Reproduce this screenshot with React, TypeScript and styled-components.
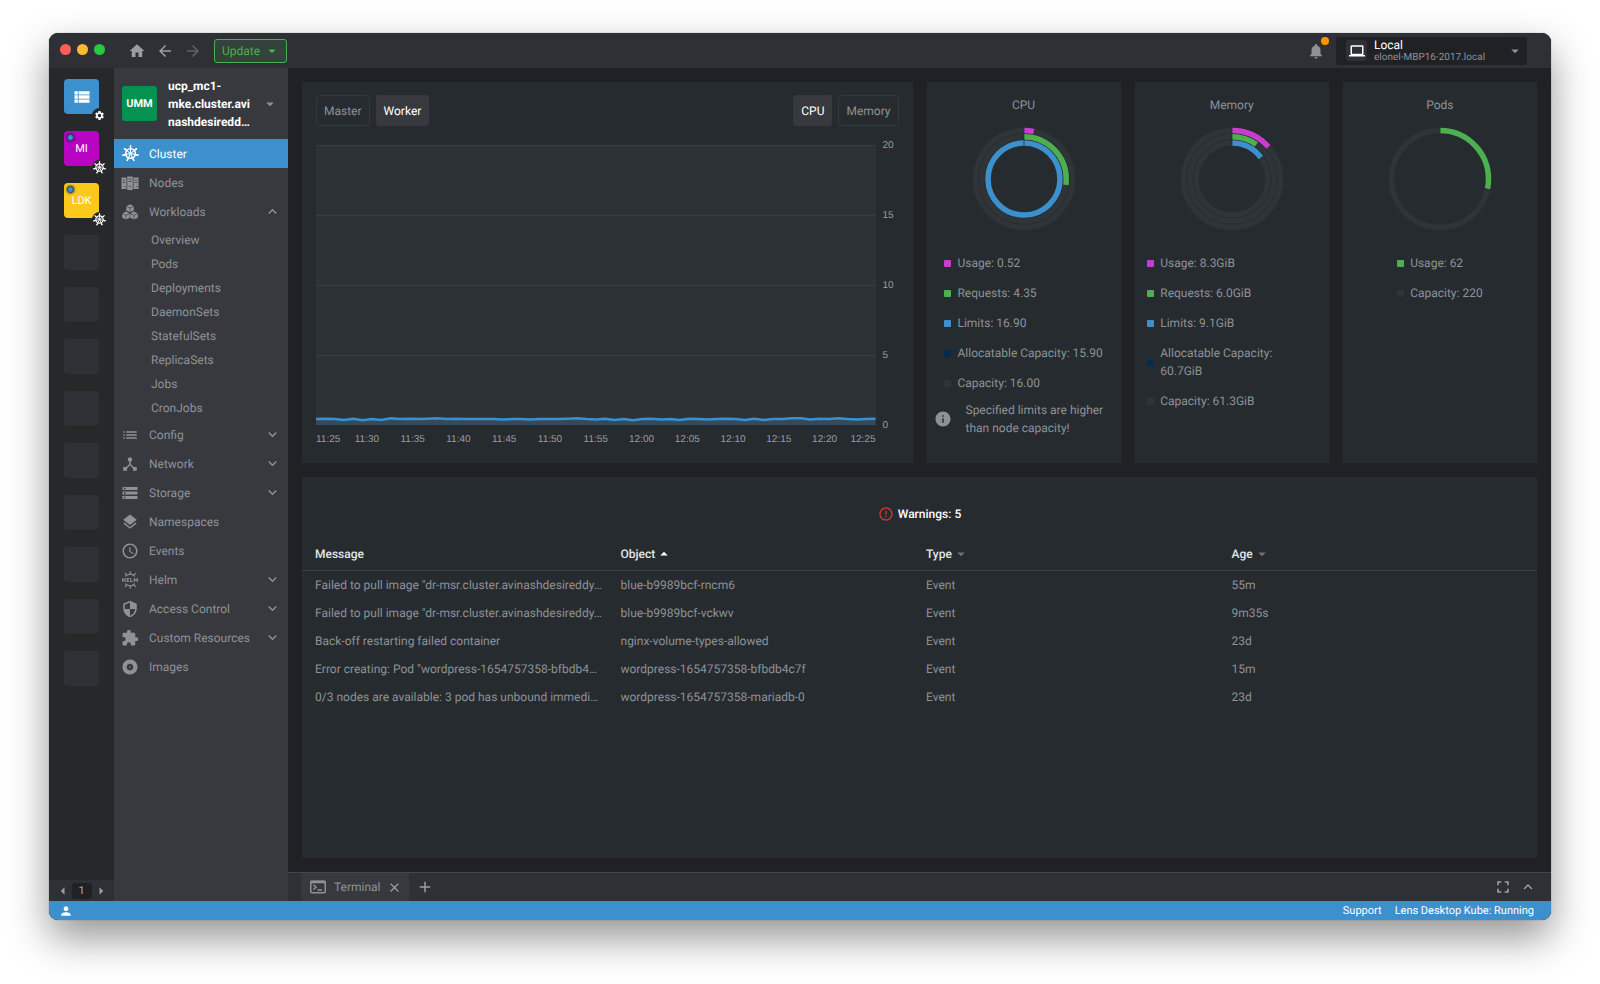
import React from "react";
import styled, { createGlobalStyle, css } from "styled-components";
import {
  MdAdd, MdAlbum, MdArrowBack, MdArrowDropDown, MdArrowDropUp, MdArrowForward, MdArrowLeft,
  MdArrowRight, MdClose, MdDeviceHub, MdErrorOutline, MdExtension, MdFullscreen, MdHome,
  MdInfo, MdKeyboardArrowDown, MdKeyboardArrowUp, MdLayers, MdList, MdNotifications,
  MdPerson, MdAccessTime, MdSecurity, MdSettings, MdStorage, MdViewList,
} from "react-icons/md";
import { SiHelm } from "react-icons/si";

const color = {
  main: "#202125",
  bar: "#2f3036",
  side: "#38393f",
  rail: "#262829",
  card: "#262b2f",
  text: "#8e9297",
  faint: "#2f3438",
  line: "#3a3e42",
  blue: "#3d90ce",
  green: "#4caf50",
  pink: "#c93dce",
  navy: "#032b4d",
};

const Global = createGlobalStyle`
  * { box-sizing: border-box; }
  body {
    margin: 0;
    background: #fff;
    color: ${color.text};
    font: 12px/18px Roboto, "Liberation Sans", sans-serif;
    text-rendering: geometricPrecision;
  }
  button { font: inherit; color: inherit; background: none; border: 0; padding: 0; margin: 0; text-rendering: inherit; }
  a { color: inherit; text-decoration: none; }
  ul { list-style: none; margin: 0; padding: 0; }
  h1, h2 { font: inherit; margin: 0; }
  svg { display: block; flex: none; }
`;

const Page = styled.div`
  display: flex;
  min-height: 100vh;
  padding: 33px 49px 64px;
`;

const Window = styled.div`
  flex: 1;
  min-width: 0;
  display: flex;
  flex-direction: column;
  overflow: hidden;
  border-radius: 9px;
  background: ${color.main};
  box-shadow: 0 0 1px rgba(0, 0, 0, 0.6), 0 18px 40px rgba(0, 0, 0, 0.42);
`;

/* ---------- title bar ---------- */

const TitleBar = styled.header`
  height: 35px;
  display: flex;
  align-items: center;
  padding: 0 24px 0 11px;
  background: ${color.bar};
`;

const Lights = styled.div`
  display: flex;
  gap: 6px;
  margin: 0 18px 3px 0;
`;

const Light = styled.button<{ $color: string }>`
  width: 11px;
  height: 11px;
  border-radius: 50%;
  background: ${(p) => p.$color};
`;

const IconButton = styled.button<{ $dim?: boolean; $width?: number }>`
  display: flex;
  align-items: center;
  justify-content: center;
  width: ${(p) => p.$width ?? 28}px;
  height: 24px;
  color: ${(p) => (p.$dim ? "#5e6166" : "#9a9ea3")};
`;

const UpdateButton = styled.button`
  display: flex;
  align-items: center;
  justify-content: space-between;
  width: 73px;
  height: 24px;
  margin-left: 7px;
  padding: 0 5px 0 7px;
  border: 1px solid ${color.green};
  border-radius: 3px;
  background: #33423a;
  color: ${color.green};
`;

const Spacer = styled.div`
  flex: 1;
`;

const Bell = styled.button`
  position: relative;
  width: 18px;
  height: 18px;
  margin-right: 11px;
  color: #8e9297;
`;

const BellDot = styled.span`
  position: absolute;
  top: -5px;
  right: -4px;
  width: 8px;
  height: 8px;
  border-radius: 50%;
  background: #ff9800;
`;

const HostButton = styled.button`
  display: flex;
  align-items: center;
  width: 191px;
  height: 28px;
  padding: 0 3px 0 10px;
  border-radius: 3px;
  background: ${color.main};
  text-align: left;
`;

const HostIcon = styled.span`
  display: flex;
  align-items: center;
  justify-content: center;
  width: 21px;
  height: 21px;
  margin-right: 7px;
  border-radius: 3px;
  background: ${color.bar};
  color: #fff;
`;

const HostText = styled.span`
  flex: 1;
  display: flex;
  flex-direction: column;
  padding-top: 2px;
  line-height: 13px;
  color: #fff;
`;

const HostSub = styled.span`
  font-size: 10px;
  line-height: 12px;
  color: #8e9297;
`;

/* ---------- body columns ---------- */

const Body = styled.div`
  flex: 1;
  display: flex;
  min-height: 0;
`;

const Rail = styled.aside`
  width: 65px;
  display: flex;
  flex-direction: column;
  background: ${color.rail};
`;

const RailList = styled.ul`
  flex: 1;
  display: flex;
  flex-direction: column;
  align-items: center;
  gap: 17px;
  padding-top: 11px;
`;

const RailTile = styled.button<{ $bg?: string }>`
  position: relative;
  display: flex;
  align-items: center;
  justify-content: center;
  width: 35px;
  height: 35px;
  border-radius: 4px;
  background: ${(p) => p.$bg ?? color.bar};
  color: #fff;
  font-size: 11px;
`;

const TileBadge = styled.span`
  position: absolute;
  right: -8px;
  bottom: -9px;
  display: flex;
  align-items: center;
  justify-content: center;
  width: 15px;
  height: 15px;
  border-radius: 50%;
  background: ${color.rail};
`;

const TileDot = styled.span`
  position: absolute;
  left: 3px;
  top: 3px;
  width: 7px;
  height: 7px;
  border-radius: 50%;
  border: 1px solid #1f3f66;
  background: ${color.blue};
  box-shadow: 0 0 2px 1px rgba(20, 30, 60, 0.5);
`;

const Pager = styled.div`
  display: flex;
  align-items: center;
  justify-content: center;
  height: 21px;
  background: ${color.bar};
`;

const PagerNumber = styled.span`
  width: 20px;
  border-radius: 3px;
  background: ${color.main};
  color: #a9adb2;
  font-size: 11px;
  line-height: 16px;
  text-align: center;
`;

const Sidebar = styled.aside`
  width: 174px;
  background: ${color.side};
`;

const ClusterButton = styled.button`
  display: flex;
  align-items: center;
  width: 100%;
  height: 71px;
  padding: 0 9px 0 8px;
  text-align: left;
`;

const ClusterIcon = styled.span`
  width: 35px;
  margin-right: 11px;
  border-radius: 3px;
  background: #05914f;
  color: #fff;
  font-size: 11px;
  font-weight: 700;
  line-height: 35px;
  text-align: center;
`;

const ClusterName = styled.span`
  flex: 1;
  color: #fff;
  font-weight: 700;
`;

const NavItem = styled.a<{ $active?: boolean }>`
  display: flex;
  align-items: center;
  height: 29px;
  padding: 0 7px;
  ${(p) =>
    p.$active &&
    css`
      background: ${color.blue};
      color: #fff;
    `}
`;

const NavIcon = styled.span`
  display: flex;
  justify-content: center;
  width: 18px;
  margin-right: 10px;
`;

const NavLabel = styled.span`
  flex: 1;
`;

const SubList = styled.ul`
  padding-top: 2px;
`;

const SubItem = styled.a`
  display: block;
  padding-left: 37px;
  line-height: 24px;
`;

/* ---------- main area ---------- */

const Content = styled.div`
  flex: 1;
  min-width: 0;
  display: flex;
  flex-direction: column;
`;

const Main = styled.main`
  flex: 1;
  display: grid;
  grid-template-rows: 1fr 1fr;
  gap: 14px;
  padding: 14px;
`;

const TopRow = styled.div`
  display: grid;
  grid-template-columns: 1fr 1fr;
  gap: 14px;
`;

const Metrics = styled.div`
  display: grid;
  grid-template-columns: repeat(3, 1fr);
  gap: 14px;
`;

const Card = styled.section`
  min-width: 0;
  background: ${color.card};
`;

const ChartCard = styled(Card)`
  padding: 13px 14px;
`;

const ChartTools = styled.div`
  display: flex;
  justify-content: space-between;
  margin-bottom: 14px;
`;

const ToggleGroup = styled.div`
  display: flex;
  gap: 6px;
`;

const Toggle = styled.button<{ $on?: boolean }>`
  height: 31px;
  padding: 0 7px;
  border: 1px solid ${(p) => (p.$on ? color.side : "#33383c")};
  border-radius: 3px;
  background: ${(p) => (p.$on ? color.side : "transparent")};
  color: ${(p) => (p.$on ? "#fff" : color.text)};
`;

const ChartGrid = styled.div`
  display: grid;
  grid-template-columns: 1fr 23px;
  color: #9a9da0;
  font: 10px/12px "Liberation Sans", sans-serif;
`;

const Plot = styled.div`
  height: 280px;
  margin: 5px 0 7px;
  background: #2d3236;
`;

const YAxis = styled.div`
  display: flex;
  flex-direction: column;
  justify-content: space-between;
  padding-left: 7px;
`;

const XAxis = styled.div`
  display: grid;
  grid-template-columns: 28px repeat(11, 1fr) 28px;
  margin-top: 2px;
  text-align: center;
  & > :first-child { text-align: left; }
  & > :last-child { text-align: right; }
`;

const MetricCard = styled(Card)`
  display: flex;
  flex-direction: column;
  align-items: center;
  padding: 14px 12px;
`;

const MetricTitle = styled.h2`
  margin-bottom: 13px;
`;

const Legend = styled.ul`
  display: flex;
  flex-direction: column;
  gap: 12px;
  margin-top: 23px;
`;

const LegendItem = styled.li`
  display: flex;
  align-items: center;
  gap: 6px;
`;

const LegendText = styled.span`
  max-width: 156px;
`;

const Swatch = styled.span<{ $color: string }>`
  flex: none;
  width: 7px;
  height: 7px;
  border-radius: 1px;
  background: ${(p) => p.$color};
`;

const Note = styled.p`
  display: flex;
  align-items: center;
  align-self: stretch;
  gap: 14px;
  margin: 9px 0 0 -5px;
`;

const WarningTitle = styled.h2`
  display: flex;
  align-items: center;
  justify-content: center;
  gap: 4px;
  padding: 28px 0 15px;
  color: #fff;
  font-weight: 500;
  svg { color: #ce3933; }
`;

const Table = styled.table`
  display: block;
  thead, tbody { display: block; }
`;

const Row = styled.tr<{ $head?: boolean }>`
  display: grid;
  grid-template-columns: repeat(4, minmax(0, 1fr));
  height: ${(p) => (p.$head ? 33 : 28)}px;
  align-items: center;
  padding-left: 13px;
  border-bottom: ${(p) => (p.$head ? `1px solid ${color.line}` : "0")};
`;

const Th = styled.th`
  padding: 0;
  color: #e4e6e8;
  font-weight: 500;
  text-align: left;
`;

const SortButton = styled.button<{ $sorted?: boolean }>`
  display: flex;
  align-items: center;
  svg { color: ${(p) => (p.$sorted ? "#fff" : "#6f7378")}; }
`;

const Td = styled.td`
  padding: 0 10px 0 0;
  overflow: hidden;
  text-overflow: ellipsis;
  white-space: nowrap;
`;

/* ---------- dock and status ---------- */

const Dock = styled.div`
  display: flex;
  height: 29px;
  padding: 0 11px 0 13px;
  align-items: center;
  border-top: 1px solid #45474c;
  background: ${color.bar};
`;

const DockTab = styled.div`
  display: flex;
  align-items: center;
  height: 28px;
  padding-left: 9px;
  background: ${color.side};
`;

const DockLabel = styled.button`
  display: flex;
  align-items: center;
  gap: 8px;
`;

const StatusBar = styled.footer`
  display: flex;
  align-items: center;
  gap: 13px;
  height: 19px;
  padding: 1px 17px 0 10px;
  background: ${color.blue};
  color: #fff;
  font-size: 11px;
`;

/* ---------- drawings ---------- */

const spokes = Array.from({ length: 7 }, (_, i) => (i * 360) / 7);

function Wheel({ size = 16 }: { size?: number }) {
  return (
    <svg width={size} height={size} viewBox="0 0 24 24" fill="none" stroke="currentColor" strokeLinecap="round">
      <circle cx="12" cy="12" r="6.8" strokeWidth="2.2" />
      <circle cx="12" cy="12" r="1.8" fill="currentColor" stroke="none" />
      {spokes.map((a) => (
        <g key={a} transform={`rotate(${a} 12 12)`}>
          <path d="M12 10V1" strokeWidth="1.5" />
          <path d="M12 3.6V1.2" strokeWidth="2.2" />
        </g>
      ))}
    </svg>
  );
}

function NodesIcon() {
  return (
    <svg width="18" height="14" viewBox="0 0 36 28" fill="currentColor">
      <path fillRule="evenodd" d="M1 3h10v23H1zM3.500 7.500v1.500h5V7.500zm0 5v1.500h5v-1.500zm3 8v2h2v-2z" />
      <path fillRule="evenodd" d="M12.500 1h11v27h-11zM15 5.500v1.500h6V5.500zm0 5v1.500h6v-1.500zm2 9v3h2v-3z" />
      <path fillRule="evenodd" d="M25 3h10v23H25zM27.500 7.500v1.500h5V7.500zm0 5v1.500h5v-1.500zm3 8v2h2v-2z" />
    </svg>
  );
}

function Cube({ x, y }: { x: number; y: number }) {
  return (
    <g transform={`translate(${x} ${y})`} fill="currentColor">
      <path d="M0 -8.500L7.500 -5L0 -1.200L-7.500 -5Z" />
      <path d="M-8 -3.600L-.6 .2V8.500L-8 4.800Z" />
      <path d="M8 -3.600L.6 .2V8.500L8 4.800Z" />
    </g>
  );
}

function WorkloadsIcon() {
  return (
    <svg width="16" height="16" viewBox="0 0 34 34">
      <Cube x={17} y={9} />
      <Cube x={8.5} y={24.5} />
      <Cube x={25.5} y={24.5} />
    </svg>
  );
}

function TerminalIcon() {
  return (
    <svg width="16" height="14" viewBox="0 0 32 28" fill="none" stroke="currentColor" strokeWidth="3">
      <rect x="1.5" y="2.500" width="29" height="23" rx="2" />
      <path d="M1 4h30" strokeWidth="5" />
      <path d="M7 10l5 4.500L7 19M15 20h9" />
    </svg>
  );
}

function LaptopIcon() {
  return (
    <svg width="16" height="12" viewBox="0 0 32 24" fill="none" stroke="currentColor" strokeWidth="3">
      <rect x="4.500" y="2" width="23" height="17" rx="1" />
      <path d="M0 21.500h32" />
    </svg>
  );
}

type Arc = { value: number; color: string };

function Donut({ arcs, label }: { arcs: Arc[]; label: string }) {
  return (
    <svg width="104" height="104" viewBox="0 0 208 208" fill="none" strokeWidth="11" role="img" aria-label={label}>
      {arcs.map((arc, i) => {
        const r = 97 - i * 12.5;
        return (
          <g key={arc.color}>
            <circle cx="104" cy="104" r={r} stroke={color.faint} />
            <circle
              cx="104" cy="104" r={r} stroke={arc.color} pathLength="100"
              strokeDasharray={`${arc.value} 100`} transform="rotate(-90 104 104)"
            />
          </g>
        );
      })}
      <path d={`M104 0V${12 + (arcs.length - 1) * 12.5 + 3}`} stroke={color.card} strokeWidth="1.500" />
    </svg>
  );
}

const samples = [
  4, 3, 4, 6, 3, 7, 4, 6, 2, 4, 3, 4, 3, 2, 4, 3, 4, 4, 4, 4, 5, 4, 4, 5, 4, 4, 4, 3, 2, 4, 5, 3,
  6, 4, 7, 4, 3, 5, 4, 6, 3, 4, 5, 4, 3, 4, 6, 3, 6, 4, 4, 2, 2, 5, 3, 4, 2, 4, 5, 4, 3,
];

function UsageChart() {
  const points = samples.map((s, i) => `${(i * 560) / (samples.length - 1)} ${272.5 + s * 0.4}`).join("L");
  return (
    <svg width="100%" height="280" viewBox="0 0 560 280" preserveAspectRatio="none" role="img" aria-label="Worker CPU usage">
      {[0, 70, 140, 210].map((y) => (
        <path key={y} d={`M0 ${y + 0.5}H560`} stroke="#383d40" strokeWidth="1" />
      ))}
      <path d={`M0 280L${points}L560 280Z`} fill="#34495a" />
      <path d={`M${points}`} fill="none" stroke={color.blue} strokeWidth="2.500" />
    </svg>
  );
}

/* ---------- data ---------- */

const subItems = ["Overview", "Pods", "Deployments", "DaemonSets", "StatefulSets", "ReplicaSets", "Jobs", "CronJobs"];

const navItems = [
  { label: "Config", icon: <MdList size={18} />, more: true },
  { label: "Network", icon: <MdDeviceHub size={18} />, more: true },
  { label: "Storage", icon: <MdStorage size={18} />, more: true },
  { label: "Namespaces", icon: <MdLayers size={18} /> },
  { label: "Events", icon: <MdAccessTime size={18} /> },
  { label: "Helm", icon: <SiHelm size={18} />, more: true },
  { label: "Access Control", icon: <MdSecurity size={18} />, more: true },
  { label: "Custom Resources", icon: <MdExtension size={18} />, more: true },
  { label: "Images", icon: <MdAlbum size={18} /> },
];

const times = ["11:25", "11:30", "11:35", "11:40", "11:45", "11:50", "11:55", "12:00", "12:05", "12:10", "12:15", "12:20", "12:25"];

const metrics = [
  {
    title: "CPU",
    arcs: [{ value: 3.25, color: color.pink }, { value: 27.2, color: color.green }, { value: 100, color: color.blue }],
    legend: [
      ["Usage: 0.52", color.pink], ["Requests: 4.35", color.green], ["Limits: 16.90", color.blue],
      ["Allocatable Capacity: 15.90", color.navy], ["Capacity: 16.00", color.faint],
    ],
    note: "Specified limits are higher than node capacity!",
  },
  {
    title: "Memory",
    arcs: [{ value: 13.5, color: color.pink }, { value: 9.8, color: color.green }, { value: 14.8, color: color.blue }],
    legend: [
      ["Usage: 8.3GiB", color.pink], ["Requests: 6.0GiB", color.green], ["Limits: 9.1GiB", color.blue],
      ["Allocatable Capacity: 60.7GiB", color.navy], ["Capacity: 61.3GiB", color.faint],
    ],
  },
  {
    title: "Pods",
    arcs: [{ value: 28.2, color: color.green }],
    legend: [["Usage: 62", color.green], ["Capacity: 220", color.faint]],
  },
];

const warnings = [
  ['Failed to pull image "dr-msr.cluster.avinashdesireddy…', "blue-b9989bcf-rncm6", "Event", "55m"],
  ['Failed to pull image "dr-msr.cluster.avinashdesireddy…', "blue-b9989bcf-vckwv", "Event", "9m35s"],
  ["Back-off restarting failed container", "nginx-volume-types-allowed", "Event", "23d"],
  ['Error creating: Pod "wordpress-1654757358-bfbdb4…', "wordpress-1654757358-bfbdb4c7f", "Event", "15m"],
  ["0/3 nodes are available: 3 pod has unbound immedi…", "wordpress-1654757358-mariadb-0", "Event", "23d"],
];

export default function App() {
  return (
    <>
      <Global />
      <Page>
        <Window>
          <TitleBar>
            <Lights>
              <Light $color="#ff5f57" aria-label="Close window" />
              <Light $color="#febc2e" aria-label="Minimize window" />
              <Light $color="#28c840" aria-label="Zoom window" />
            </Lights>
            <IconButton aria-label="Home"><MdHome size={18} /></IconButton>
            <IconButton aria-label="Back"><MdArrowBack size={18} /></IconButton>
            <IconButton $dim aria-label="Forward"><MdArrowForward size={18} /></IconButton>
            <UpdateButton>Update<MdArrowDropDown size={18} /></UpdateButton>
            <Spacer />
            <Bell aria-label="Notifications"><MdNotifications size={18} /><BellDot /></Bell>
            <HostButton>
              <HostIcon><LaptopIcon /></HostIcon>
              <HostText>Local<HostSub>elonel-MBP16-2017.local</HostSub></HostText>
              <MdArrowDropDown size={18} />
            </HostButton>
          </TitleBar>

          <Body>
            <Rail>
              <RailList>
                <li>
                  <RailTile $bg={color.blue} aria-label="Catalog">
                    <MdViewList size={20} />
                    <TileBadge><MdSettings size={11} /></TileBadge>
                  </RailTile>
                </li>
                <li>
                  <RailTile $bg="#b905c1">MI<TileDot /><TileBadge><Wheel size={13} /></TileBadge></RailTile>
                </li>
                <li>
                  <RailTile $bg="#fbc91b">LDK<TileDot /><TileBadge><Wheel size={13} /></TileBadge></RailTile>
                </li>
                {Array.from({ length: 9 }, (_, i) => (
                  <li key={i}><RailTile aria-label={`Empty slot ${i + 4}`} /></li>
                ))}
              </RailList>
              <Pager>
                <IconButton $width={18} aria-label="Previous page"><MdArrowLeft size={18} /></IconButton>
                <PagerNumber>1</PagerNumber>
                <IconButton $width={18} aria-label="Next page"><MdArrowRight size={18} /></IconButton>
              </Pager>
            </Rail>

            <Sidebar>
              <ClusterButton>
                <ClusterIcon>UMM</ClusterIcon>
                <ClusterName>ucp_mc1-<br />mke.cluster.avi<br />nashdesiredd…</ClusterName>
                <MdArrowDropDown size={18} />
              </ClusterButton>
              <nav>
                <NavItem href="#" $active><NavIcon><Wheel size={17} /></NavIcon><NavLabel>Cluster</NavLabel></NavItem>
                <NavItem href="#"><NavIcon><NodesIcon /></NavIcon><NavLabel>Nodes</NavLabel></NavItem>
                <NavItem href="#">
                  <NavIcon><WorkloadsIcon /></NavIcon><NavLabel>Workloads</NavLabel><MdKeyboardArrowUp size={17} />
                </NavItem>
                <SubList>
                  {subItems.map((s) => <li key={s}><SubItem href="#">{s}</SubItem></li>)}
                </SubList>
                {navItems.map((n) => (
                  <NavItem href="#" key={n.label}>
                    <NavIcon>{n.icon}</NavIcon><NavLabel>{n.label}</NavLabel>
                    {n.more && <MdKeyboardArrowDown size={17} />}
                  </NavItem>
                ))}
              </nav>
            </Sidebar>

            <Content>
              <Main>
                <TopRow>
                  <ChartCard>
                    <ChartTools>
                      <ToggleGroup><Toggle>Master</Toggle><Toggle $on>Worker</Toggle></ToggleGroup>
                      <ToggleGroup><Toggle $on>CPU</Toggle><Toggle>Memory</Toggle></ToggleGroup>
                    </ChartTools>
                    <ChartGrid>
                      <Plot><UsageChart /></Plot>
                      <YAxis>{[20, 15, 10, 5, 0].map((v) => <span key={v}>{v}</span>)}</YAxis>
                      <XAxis>{times.map((t) => <span key={t}>{t}</span>)}</XAxis>
                    </ChartGrid>
                  </ChartCard>
                  <Metrics>
                    {metrics.map((m) => (
                      <MetricCard key={m.title}>
                        <MetricTitle>{m.title}</MetricTitle>
                        <Donut arcs={m.arcs} label={m.title} />
                        <Legend>
                          {m.legend.map(([text, c]) => (
                            <LegendItem key={text}><Swatch $color={c} /><LegendText>{text}</LegendText></LegendItem>
                          ))}
                        </Legend>
                        {m.note && <Note><MdInfo size={18} /><span>{m.note}</span></Note>}
                      </MetricCard>
                    ))}
                  </Metrics>
                </TopRow>
                <Card>
                  <WarningTitle><MdErrorOutline size={16} />Warnings: 5</WarningTitle>
                  <Table>
                    <thead>
                      <Row $head>
                        <Th scope="col">Message</Th>
                        <Th scope="col"><SortButton $sorted>Object<MdArrowDropUp size={18} /></SortButton></Th>
                        <Th scope="col"><SortButton>Type<MdArrowDropDown size={18} /></SortButton></Th>
                        <Th scope="col"><SortButton>Age<MdArrowDropDown size={18} /></SortButton></Th>
                      </Row>
                    </thead>
                    <tbody>
                      {warnings.map((w) => (
                        <Row key={w[1]}>{w.map((cell, i) => <Td key={i}>{cell}</Td>)}</Row>
                      ))}
                    </tbody>
                  </Table>
                </Card>
              </Main>
              <Dock>
                <DockTab>
                  <DockLabel><TerminalIcon />Terminal</DockLabel>
                  <IconButton $width={28} aria-label="Close terminal"><MdClose size={15} /></IconButton>
                </DockTab>
                <IconButton $width={32} aria-label="New tab"><MdAdd size={18} /></IconButton>
                <Spacer />
                <IconButton $width={25} aria-label="Fullscreen"><MdFullscreen size={20} /></IconButton>
                <IconButton $width={25} aria-label="Open dock"><MdKeyboardArrowUp size={18} /></IconButton>
              </Dock>
            </Content>
          </Body>

          <StatusBar>
            <MdPerson size={14} />
            <Spacer />
            <a href="#">Support</a>
            <span>Lens Desktop Kube: Running</span>
          </StatusBar>
        </Window>
      </Page>
    </>
  );
}
